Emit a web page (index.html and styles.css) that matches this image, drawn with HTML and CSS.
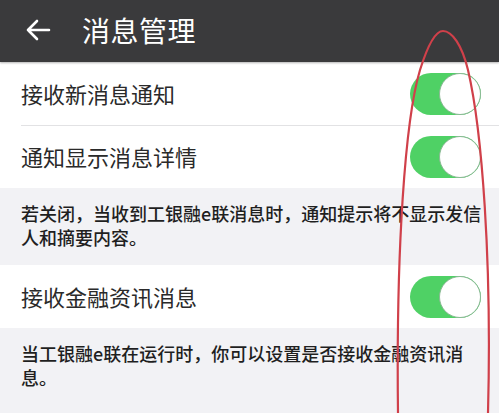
FILE: index.html
```html
<!DOCTYPE html>
<html lang="zh-CN">
<head>
    <meta charset="utf-8">
    <meta name="viewport" content="width=device-width, initial-scale=1">
    <link rel="stylesheet" href="styles.css">
    <title>消息管理</title>
</head>
<body>
<div class="topBar">
    <svg class="backArrow" width="26" height="22" viewBox="0 0 26 22">
        <path d="M24 11H3M12 2L3 11l9 9" fill="none" stroke="#fff" stroke-width="2.6" stroke-linecap="round" stroke-linejoin="round"/>
    </svg>
    <span class="topTitle">消息管理</span>
</div>

<div class="group">
    <div class="row">
        <span class="rowLabel">接收新消息通知</span>
        <span class="toggle"><span class="knob"></span></span>
    </div>
    <div class="row">
        <span class="rowLabel">通知显示消息详情</span>
        <span class="toggle"><span class="knob"></span></span>
    </div>
</div>
<div class="note">若关闭，当收到工银融e联消息时，通知提示将不显示发信人和摘要内容。</div>

<div class="group">
    <div class="row">
        <span class="rowLabel">接收金融资讯消息</span>
        <span class="toggle"><span class="knob"></span></span>
    </div>
</div>
<div class="note">当工银融e联在运行时，你可以设置是否接收金融资讯消息。</div>

<!-- red hand-drawn mark over the switches -->
<svg class="redMark" width="499" height="413" viewBox="0 0 499 413">
    <path d="M398 413 C396 250 405 120 420 70 C430 38 438 31 443 31 C452 31 462 45 468 70 C482 130 492 260 488 413" fill="none" stroke="#d0404a" stroke-width="2.2"/>
</svg>
</body>
</html>
```

FILE: styles.css
```css
body {
    margin: 0;
    width: 499px;
    height: 413px;
    overflow: hidden;
    position: relative;
    background: #f2f2f5;
    font-family: "Noto Sans CJK SC", "Noto Sans", sans-serif;
}

.topBar {
    height: 62px;
    background: #3a3a3c;
    display: flex;
    align-items: center;
    box-shadow: 0 1px 2px rgba(0, 0, 0, 0.3);
    position: relative;
    z-index: 1;
}
.backArrow {
    margin: 0 0 2px 25px;
}
.topTitle {
    margin-left: 31px;
    color: #fff;
    font-size: 28px;
    margin-top: -3px;
    letter-spacing: 0.5px;
}

.group {
    background: #fff;
    padding-left: 21px;
}
.row {
    height: 63px;
    display: flex;
    align-items: center;
    justify-content: space-between;
    padding-right: 18px;
}
.row + .row {
    border-top: 1px solid #e2e2e4;
    height: 62px;
}
.rowLabel {
    font-size: 22px;
    color: #2a2a2a;
    margin-top: -2px;
}

.toggle {
    width: 71px;
    height: 42px;
    border-radius: 21px;
    background: #4fd165;
    display: flex;
    justify-content: flex-end;
}
.knob {
    width: 40px;
    height: 40px;
    border-radius: 50%;
    background: #fff;
    border: 1px solid #8ab894;
}

.note {
    padding: 13px 8px 16px 21px;
    font-size: 18px;
    line-height: 24px;
    color: #1f1f1f;
    font-weight: 500;
}

.redMark {
    position: absolute;
    top: 0;
    left: 0;
    z-index: 2;
}
```
